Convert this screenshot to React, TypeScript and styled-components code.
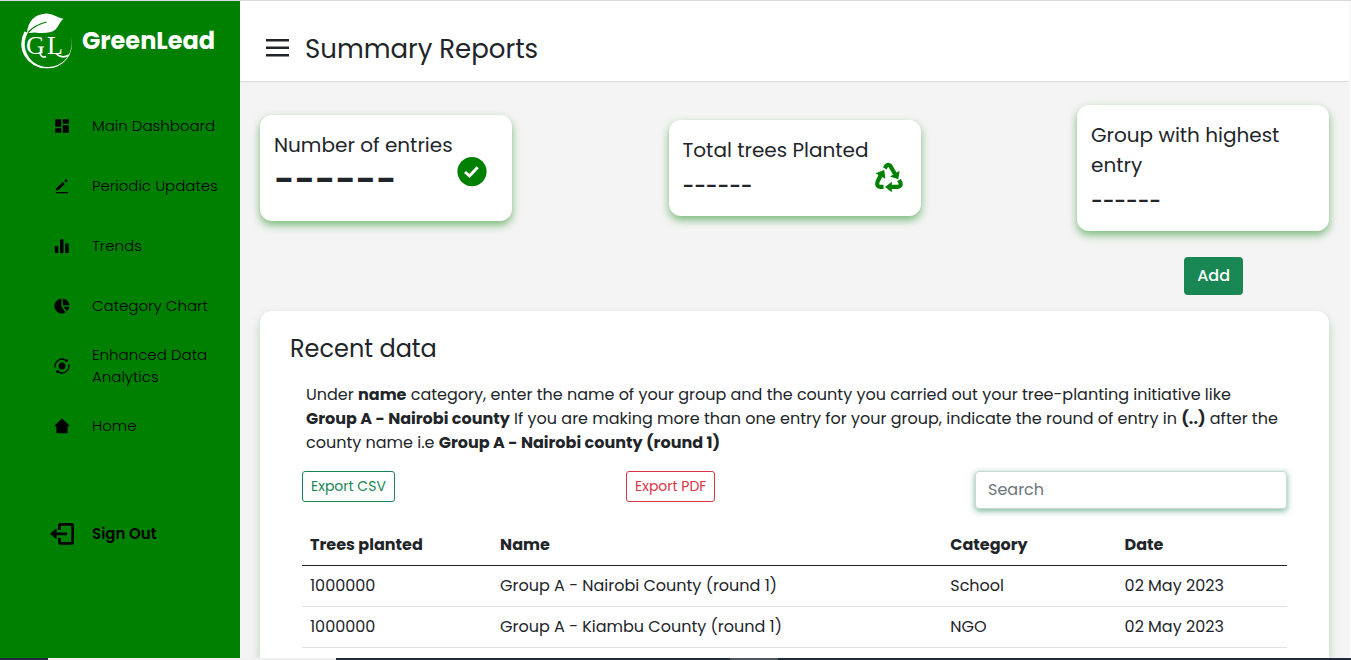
import React from "react";
import styled, { createGlobalStyle } from "styled-components";

const GlobalStyle = createGlobalStyle`
  *, *::before, *::after { box-sizing: border-box; }
  body {
    margin: 0;
    font-family: Poppins, Inter, "Open Sans", sans-serif;
    font-size: 16px;
    font-weight: 400;
    line-height: 24px;
    color: #212529;
    background: #f4f4f4;
  }
  h1, h2, h3, p, ul { margin: 0; padding: 0; }
  h1, h2, h3 { font-weight: 400; }
  button, input { font: inherit; }
`;

const Screen = styled.div`
  display: flex;
  flex-direction: column;
  height: 100vh;
  overflow: hidden;
  border-top: 1px solid #dadada;
`;

const Page = styled.div`
  flex: 1;
  min-height: 0;
  display: grid;
  grid-template-columns: 240px minmax(0, 1fr);
`;

const Sidebar = styled.aside`
  background: #008000;
  overflow: hidden;
`;

const Brand = styled.a`
  display: flex;
  align-items: center;
  gap: 10px;
  height: 80px;
  padding-left: 20px;
  color: #fff;
  font-size: 24px;
  font-weight: 700;
  text-decoration: none;
`;

const NavList = styled.ul`
  list-style: none;
  padding-top: 15px;
`;

const NavItem = styled.li<{ $apart?: boolean }>`
  margin-top: ${(p) => (p.$apart ? "48px" : "0")};
`;

const NavLink = styled.a<{ $strong?: boolean }>`
  display: grid;
  grid-template-columns: 28px minmax(0, 1fr);
  column-gap: 16px;
  align-items: center;
  height: 60px;
  padding: 0 16px 0 48px;
  color: #000;
  font-size: 15px;
  line-height: 22px;
  font-weight: ${(p) => (p.$strong ? 600 : 300)};
  text-decoration: none;

  svg {
    justify-self: center;
  }
`;

const Main = styled.main`
  display: flex;
  flex-direction: column;
  min-width: 0;
  overflow: hidden;
  border-right: 2px solid #f8f8f8;
`;

const TopBar = styled.header`
  flex: none;
  display: flex;
  align-items: center;
  gap: 15px;
  height: 81px;
  padding: 14px 24px 0;
  background: #fff;
  border-bottom: 1px solid #dedede;
`;

const MenuButton = styled.button`
  display: flex;
  padding: 0;
  border: 0;
  background: none;
  color: #212529;
`;

const PageTitle = styled.h1`
  padding-top: 2px;
  font-size: 26px;
  line-height: 34px;
`;

const Content = styled.div`
  flex: 1;
  min-height: 0;
  display: flex;
  flex-direction: column;
  padding: 23px 20px 0;
`;

const CardRow = styled.section`
  display: flex;
  justify-content: space-between;
  align-items: center;
`;

const Card = styled.article`
  display: grid;
  grid-template-columns: minmax(0, 1fr) 30px;
  width: 252px;
  padding: 15px 14px;
  border-radius: 12px;
  background: #fff;
  box-shadow: 0 4px 8px rgba(0, 128, 0, 0.5);
`;

const CardTitle = styled.h2`
  grid-column: 1 / -1;
  font-size: 20px;
  line-height: 30px;
`;

const CardValue = styled.p<{ $large?: boolean }>`
  padding: ${(p) => (p.$large ? "6px 0 10px" : "6px 0 0")};
  font-size: ${(p) => (p.$large ? "35px" : "20px")};
  line-height: 30px;
  font-weight: 600;
`;

const CardIcon = styled.span<{ $inset: number }>`
  display: flex;
  align-items: flex-start;
  justify-content: flex-end;
  margin-top: -3px;
  padding-right: ${(p) => p.$inset}px;
  color: #008000;

  svg {
    flex: none;
  }
`;

const Actions = styled.div`
  display: flex;
  justify-content: flex-end;
  padding: 26px 86px 16px 0;
`;

const AddButton = styled.button`
  height: 38px;
  padding: 0 13px;
  border: 0;
  border-radius: 4px;
  background: #198754;
  color: #fff;
  font-weight: 500;
`;

const Panel = styled.section`
  flex: 1;
  min-height: 0;
  padding: 22px 30px 0;
  border-radius: 12px 12px 0 0;
  background: #fff;
  box-shadow: 0 5px 10px rgba(0, 90, 0, 0.25);
`;

const PanelTitle = styled.h2`
  font-size: 24px;
  line-height: 32px;
`;

const Hint = styled.p`
  padding: 18px 16px 16px;

  b {
    font-weight: 700;
  }
`;

const Tools = styled.div`
  display: grid;
  grid-template-columns: 324fr 349fr 312fr;
  align-items: start;
  justify-items: start;
  padding: 0 12px;
`;

const ExportButton = styled.button<{ $color: string }>`
  height: 31px;
  padding: 0 8px;
  border: 1px solid ${(p) => p.$color};
  border-radius: 3px;
  background: #fff;
  color: ${(p) => p.$color};
  font-size: 14px;
  line-height: 21px;
`;

const SearchBox = styled.input`
  width: 100%;
  height: 38px;
  padding: 0 12px 2px;
  border: 1px solid #cdd8d2;
  border-radius: 4px;
  background: #fff;
  box-shadow: 0 2px 6px rgba(25, 135, 84, 0.6);
  color: #212529;

  &::placeholder {
    color: #6c757d;
    opacity: 1;
  }
`;

const TableWrap = styled.div`
  padding: 15px 12px 0;
`;

const DataTable = styled.table`
  width: 100%;
  table-layout: fixed;
  border-collapse: collapse;

  th,
  td {
    height: 41px;
    padding: 0 8px;
    border-bottom: 1px solid #dee2e6;
    text-align: left;
  }

  th {
    padding-top: 2px;
    border-bottom-color: #212529;
    font-weight: 700;
  }
`;

const Column = styled.col<{ $share: number }>`
  width: ${(p) => p.$share}%;
`;

const Taskbar = styled.footer`
  flex: none;
  display: grid;
  grid-template-columns: 48px 288px 394px 48px minmax(0, 1fr);
  height: 2px;
  background: #1f2b3a;
`;

const TaskbarItem = styled.span<{ $column: number; $color: string }>`
  grid-column: ${(p) => p.$column};
  background: ${(p) => p.$color};
`;

const Logo = () => (
  <svg width="52" height="56" viewBox="0 0 52 56" aria-hidden="true">
    <path
      d="M4.500 18.500A24.600 24.600 0 0 0 26.500 55.300A24.300 24.300 0 0 0 51 24A23.800 23.800 0 0 1 26.800 54A22.800 22.800 0 0 1 8 19.500Z"
      fill="#fff"
    />
    <path
      d="M7 19.500C8 9 14 1.500 26 .6C32 .3 37 4.600 43.500 5.800C40 8.300 39 13 35.500 16.500C31 20.500 22 20.500 15 19.500L9.500 20Z"
      fill="#fff"
    />
    <path d="M8 19.500C13 14 19 10.800 26.500 9" fill="none" stroke="#008000" strokeWidth="1.200" />
    <text x="6" y="41" fill="#fff" fontFamily="Liberation Serif, serif" fontSize="26" fontWeight="400">G</text>
    <text x="27" y="41" fill="#fff" fontFamily="Liberation Serif, serif" fontSize="26" fontWeight="400">L</text>
    <path d="M20 39C20 43 23 45 26 43.500M36 40.500C40 44.500 44 45 49 42" fill="none" stroke="#fff" strokeWidth="1.600" />
  </svg>
);

const DashboardIcon = () => (
  <svg width="18" height="18" viewBox="0 0 24 24" fill="currentColor" aria-hidden="true">
    <path d="M3 13h8V3H3v10zm0 8h8v-6H3v6zm10 0h8V11h-8v10zm0-18v6h8V3h-8z" />
  </svg>
);

const PencilIcon = () => (
  <svg width="16" height="16" viewBox="0 0 16 16" fill="currentColor" aria-hidden="true">
    <path d="M2 10.400L8.800 3.900L10.900 6L4.300 12.300H2ZM10.200 2.600L11.500 1.400Q12.100 .9 12.700 1.500L13.400 2.200Q13.900 2.800 13.400 3.300L12.200 4.600ZM2 14.100h12v1.100H2Z" />
  </svg>
);

const TrendsIcon = () => (
  <svg width="16" height="16" viewBox="0 0 16 16" fill="currentColor" aria-hidden="true">
    <rect x=".8" y="8" width="3.500" height="7" rx=".8" />
    <rect x="6" y="1.200" width="3.500" height="14" rx=".8" />
    <rect x="11.200" y="5.500" width="3.500" height="9.500" rx=".8" />
  </svg>
);

const PieIcon = () => (
  <svg width="16" height="16" viewBox="0 0 16 16" fill="currentColor" aria-hidden="true">
    <path d="M7.400 .5V8.300L11.600 14.500A7.500 7.500 0 1 1 7.400 .5Z" />
    <path d="M8.800 .5A7.300 7.300 0 0 1 15.400 7.300H8.800Z" />
    <path d="M9.600 8.700H15.400A7.300 7.300 0 0 1 12.800 13.600Z" />
  </svg>
);

const AnalyticsIcon = () => (
  <svg width="16" height="16" viewBox="0 0 16 16" fill="none" stroke="currentColor" aria-hidden="true">
    <circle cx="8" cy="8" r="3.400" fill="currentColor" stroke="none" />
    <path d="M1.200 9.500A6.900 6.900 0 0 1 11.500 2.100M14.800 6.500A6.900 6.900 0 0 1 4.500 13.900" strokeWidth="1.300" />
    <circle cx="12.400" cy="2.600" r="1.500" fill="currentColor" stroke="none" />
    <circle cx="3.600" cy="13.400" r="1.500" fill="currentColor" stroke="none" />
  </svg>
);

const HomeIcon = () => (
  <svg width="16" height="16" viewBox="0 0 16 16" fill="currentColor" aria-hidden="true">
    <path d="M8 .6L15.400 7.400Q15.700 8.200 15 8.200H13.600V14.400Q13.600 15.300 12.700 15.300H3.300Q2.400 15.300 2.400 14.400V8.200H1Q.3 8.200 .6 7.400Z" />
  </svg>
);

const SignOutIcon = () => (
  <svg width="26" height="24" viewBox="0 0 26 24" aria-hidden="true">
    <path
      d="M10.400 8V3.500Q10.400 2.300 11.600 2.300H22.400Q23.600 2.300 23.600 3.500V20.200Q23.600 21.400 22.400 21.400H11.600Q10.400 21.400 10.400 20.200V15.700"
      fill="none"
      stroke="currentColor"
      strokeWidth="2.700"
    />
    <path d="M1 11.800L7.600 6.300V10.400H18V13.200H7.600V17.300Z" fill="currentColor" />
  </svg>
);

const MenuIcon = () => (
  <svg width="26" height="20" viewBox="0 0 26 20" fill="currentColor" aria-hidden="true">
    <path d="M2 1h23v2.500H2zM2 8.500h23V11H2zM2 16h23v2.500H2z" />
  </svg>
);

const CheckIcon = () => (
  <svg width="30" height="30" viewBox="0 0 30 30" aria-hidden="true">
    <circle cx="15" cy="14.600" r="14.600" fill="currentColor" />
    <path d="M8 15L12.500 19L20.700 10.300" fill="none" stroke="#fff" strokeWidth="3" />
  </svg>
);

const RecycleIcon = () => (
  <svg width="30" height="32" viewBox="0 0 30 32" fill="currentColor" aria-hidden="true">
    <path
      d="M10.800 6.300L12.300 3.800Q14.300 1.800 16.200 3.800L21 12M6.600 13.500L3.600 19.500Q2 24.800 6.500 24.900H9.500M17 24.900H23.500Q27.600 24.600 26.400 20.500L25 18"
      fill="none"
      stroke="currentColor"
      strokeWidth="4.200"
    />
    <path d="M16 14.600L25.600 8.800L24.300 17.200ZM1.500 11.200L10.300 8L11.300 16.800ZM11 24.900L17.800 19.700V30.200Z" />
  </svg>
);

const navigation = [
  { label: "Main Dashboard", icon: <DashboardIcon /> },
  { label: "Periodic Updates", icon: <PencilIcon /> },
  { label: "Trends", icon: <TrendsIcon /> },
  { label: "Category Chart", icon: <PieIcon /> },
  { label: "Enhanced Data Analytics", icon: <AnalyticsIcon /> },
  { label: "Home", icon: <HomeIcon /> },
];

const columns = [
  { label: "Trees planted", share: 19.3 },
  { label: "Name", share: 45.7 },
  { label: "Category", share: 17.7 },
  { label: "Date", share: 17.3 },
];

const rows = [
  ["1000000", "Group A - Nairobi County (round 1)", "School", "02 May 2023"],
  ["1000000", "Group A - Kiambu County (round 1)", "NGO", "02 May 2023"],
];

export default function App() {
  return (
    <Screen>
      <GlobalStyle />
      <Page>
        <Sidebar>
          <Brand href="#">
            <Logo />
            GreenLead
          </Brand>
          <nav>
            <NavList>
              {navigation.map((item) => (
                <NavItem key={item.label}>
                  <NavLink href="#">
                    {item.icon}
                    {item.label}
                  </NavLink>
                </NavItem>
              ))}
              <NavItem $apart>
                <NavLink href="#" $strong>
                  <SignOutIcon />
                  Sign Out
                </NavLink>
              </NavItem>
            </NavList>
          </nav>
        </Sidebar>
        <Main>
          <TopBar>
            <MenuButton type="button" aria-label="Toggle menu">
              <MenuIcon />
            </MenuButton>
            <PageTitle>Summary Reports</PageTitle>
          </TopBar>
          <Content>
            <CardRow>
              <Card>
                <CardTitle>Number of entries</CardTitle>
                <CardValue $large>------</CardValue>
                <CardIcon $inset={11}>
                  <CheckIcon />
                </CardIcon>
              </Card>
              <Card>
                <CardTitle>Total trees Planted</CardTitle>
                <CardValue>------</CardValue>
                <CardIcon $inset={3}>
                  <RecycleIcon />
                </CardIcon>
              </Card>
              <Card>
                <CardTitle>Group with highest entry</CardTitle>
                <CardValue>------</CardValue>
              </Card>
            </CardRow>
            <Actions>
              <AddButton type="button">Add</AddButton>
            </Actions>
            <Panel>
              <PanelTitle>Recent data</PanelTitle>
              <Hint>
                Under <b>name</b> category, enter the name of your group and the county you carried out your
                tree-planting initiative like <b>Group A - Nairobi county</b> If you are making more than one entry
                for your group, indicate the round of entry in <b>(..)</b> after the county name i.e{" "}
                <b>Group A - Nairobi county (round 1)</b>
              </Hint>
              <Tools>
                <ExportButton type="button" $color="#198754">
                  Export CSV
                </ExportButton>
                <ExportButton type="button" $color="#dc3545">
                  Export PDF
                </ExportButton>
                <SearchBox type="search" aria-label="Search" placeholder="Search" />
              </Tools>
              <TableWrap>
                <DataTable>
                  <colgroup>
                    {columns.map((column) => (
                      <Column key={column.label} $share={column.share} />
                    ))}
                  </colgroup>
                  <thead>
                    <tr>
                      {columns.map((column) => (
                        <th key={column.label} scope="col">
                          {column.label}
                        </th>
                      ))}
                    </tr>
                  </thead>
                  <tbody>
                    {rows.map((row) => (
                      <tr key={row[1]}>
                        {row.map((cell) => (
                          <td key={cell}>{cell}</td>
                        ))}
                      </tr>
                    ))}
                  </tbody>
                </DataTable>
              </TableWrap>
            </Panel>
          </Content>
        </Main>
      </Page>
      <Taskbar>
        <TaskbarItem $column={2} $color="#f0f0f0" />
        <TaskbarItem $column={4} $color="#4c5562" />
      </Taskbar>
    </Screen>
  );
}
